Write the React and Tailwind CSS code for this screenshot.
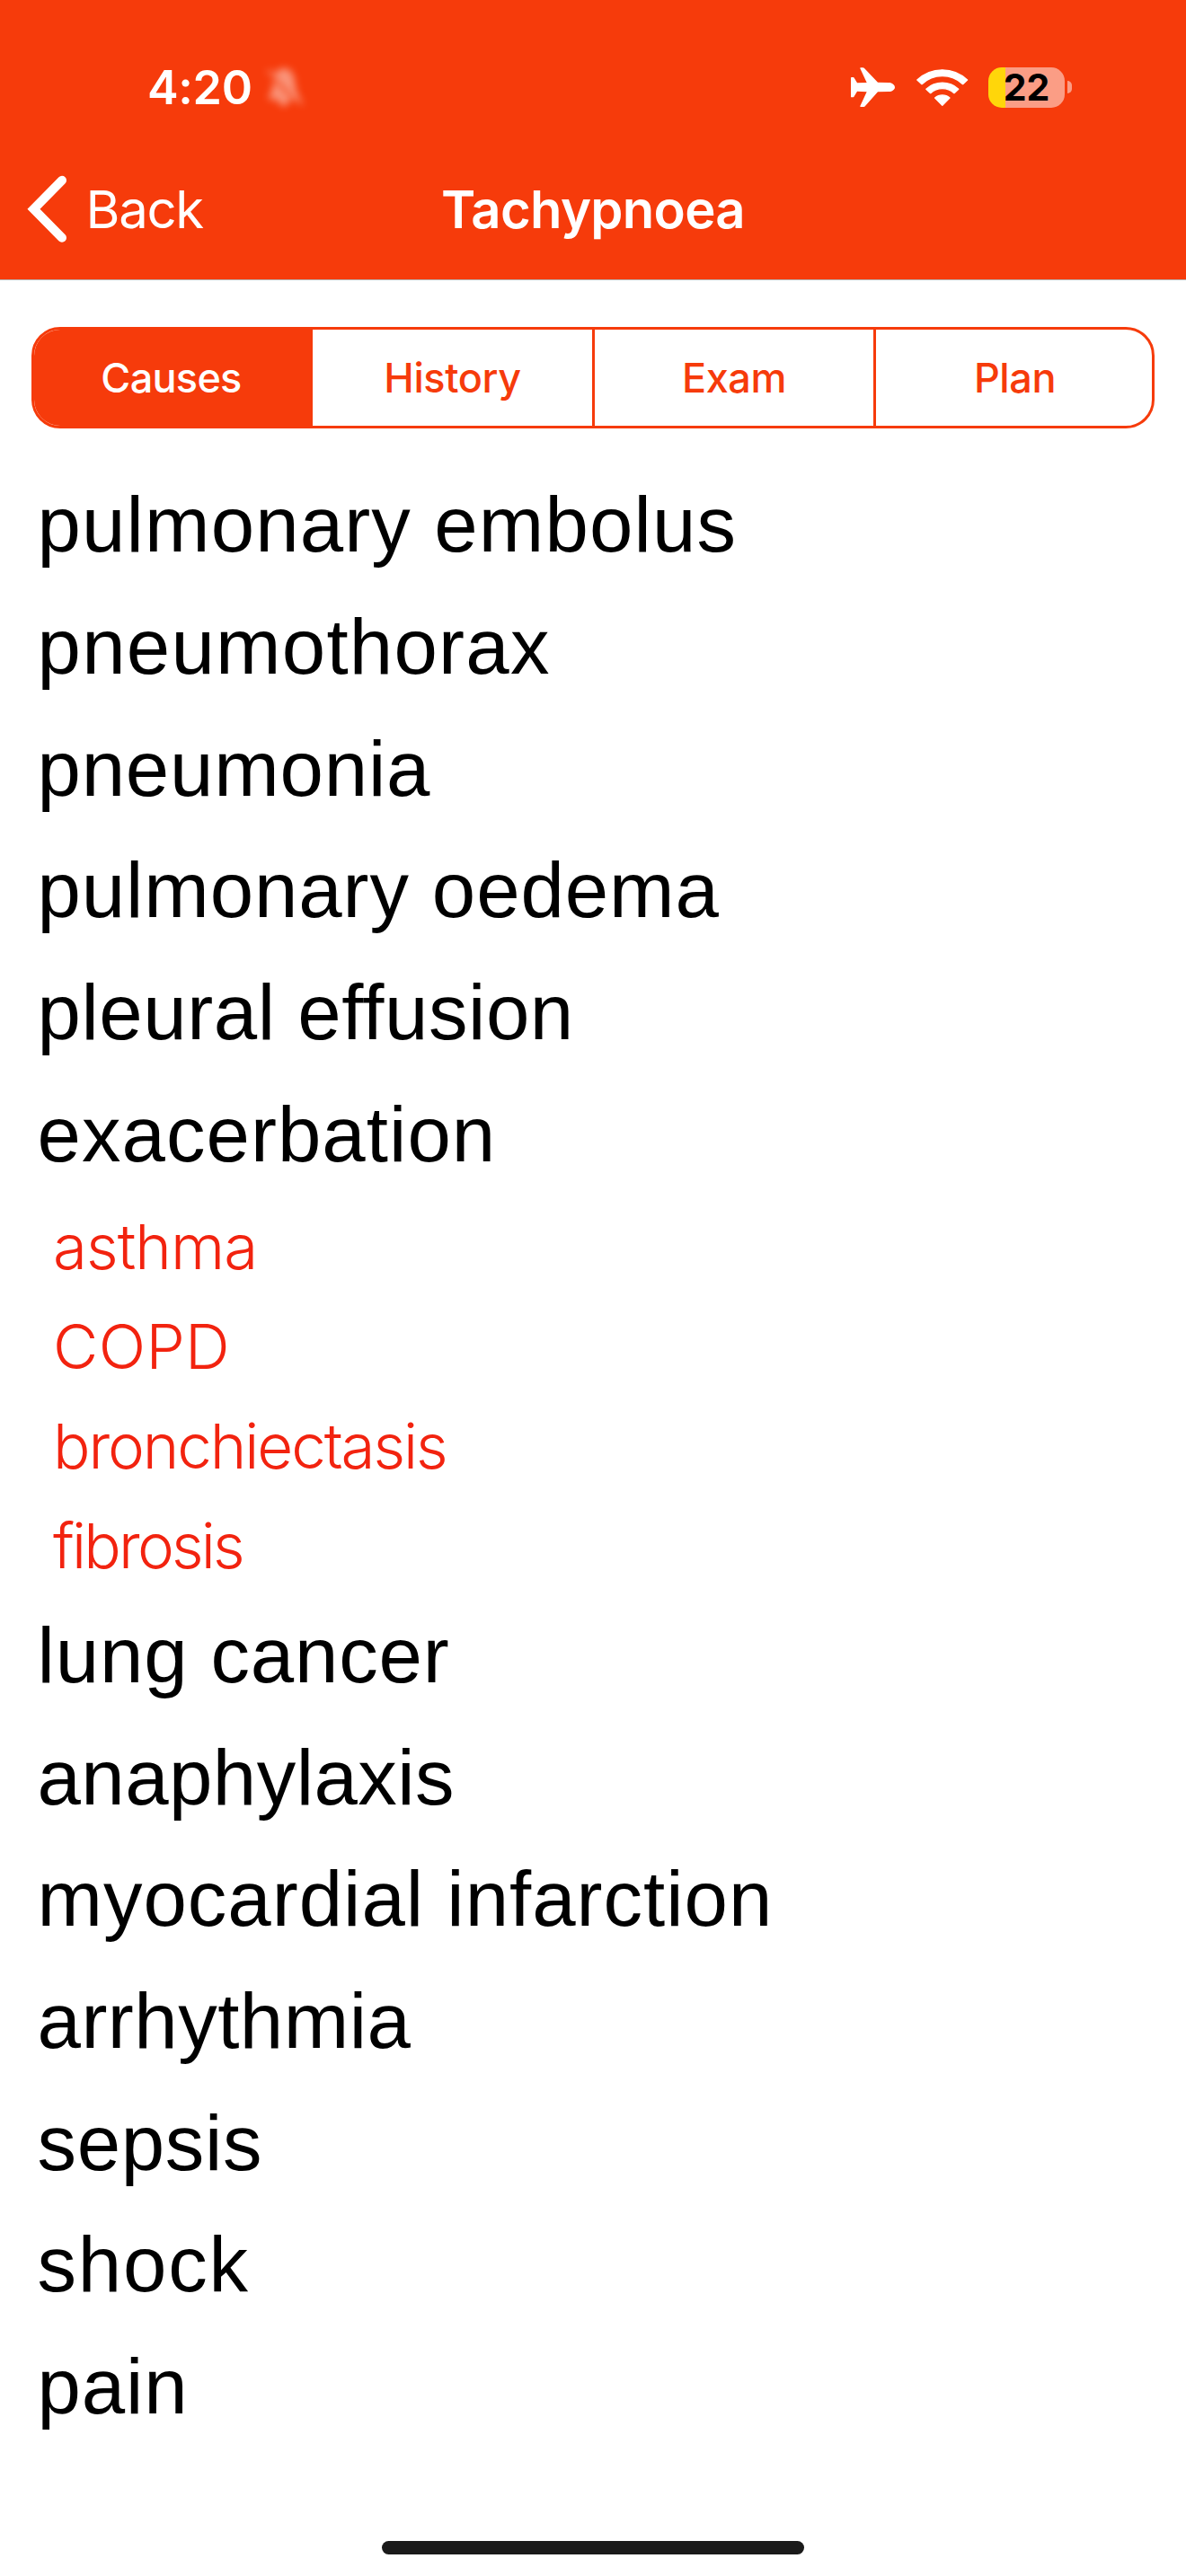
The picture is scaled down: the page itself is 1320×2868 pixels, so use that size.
import React from "react";

const causes = [
  { text: "pulmonary embolus", spacing: "tracking-[1.14px]" },
  { text: "pneumothorax", spacing: "tracking-[1.25px]" },
  { text: "pneumonia", spacing: "tracking-[0.8px]" },
  { text: "pulmonary oedema", spacing: "tracking-[0.9px]" },
  { text: "pleural effusion", spacing: "tracking-[0.55px]" },
  {
    text: "exacerbation",
    spacing: "tracking-[1.05px]",
    children: [
      { text: "asthma", spacing: "tracking-[-0.92px]" },
      { text: "COPD", spacing: "tracking-[0.4px]" },
      { text: "bronchiectasis", spacing: "tracking-[-2.1px]" },
      { text: "fibrosis", spacing: "tracking-[-2.8px]" },
    ],
  },
  { text: "lung cancer", spacing: "tracking-[0.85px]" },
  { text: "anaphylaxis", spacing: "tracking-[0.45px]" },
  { text: "myocardial infarction", spacing: "tracking-[1px]" },
  { text: "arrhythmia", spacing: "tracking-[0.49px]" },
  { text: "sepsis", spacing: "tracking-[0.7px]" },
  { text: "shock", spacing: "tracking-[1.8px]" },
  { text: "pain", spacing: "tracking-[0.9px]" },
];

function MutedBell() {
  return (
    <svg viewBox="0 0 36 44" className="ml-[17px] h-[44px] w-[36px] overflow-visible opacity-45 blur-[4.5px]" fill="#fff">
      <path d="M18 1C25 1 29 7 30 15C31 23 31 26 34 30C36 34 35 36 31 36H24C23 41 20 43 18 43C15 43 12 41 12 36H5C0 36 0 33 3 29C6 25 5 21 6 15C7 7 11 1 18 1Z" />
      <path d="M1 4L38 40" stroke="#fff" strokeWidth="3" strokeLinecap="round" />
      <path d="M4 10L28 34" stroke="#f63b0b" strokeWidth="3" />
    </svg>
  );
}

function Plane() {
  return (
    <svg viewBox="81 78 147 133" className="h-[44.3px] w-[49px]" fill="#fff">
      <path d="M81 113Q81 111 83 111H89Q91 111 92 113L102 130L134 129L112 82Q111 79 114 79H121Q124 79 126 81L171 128L208 129C219 129 228 137 228 144.500C228 152 219 159 208 159L171 160L129 207Q127 210 124 210H114Q111 210 112 207L134 160L102 158L92 175Q91 178 89 178H83Q81 178 81 176Z" />
    </svg>
  );
}

function Wifi() {
  return (
    <svg viewBox="299 75 173 127" className="h-[42.3px] w-[57.6px]" fill="#fff" stroke="#fff" strokeWidth="4" strokeLinejoin="round">
      <path d="M301.500 114A121.500 121.500 0 0 1 469 114L454 128A99.500 99.500 0 0 0 317 128Z" />
      <path d="M331.500 144.500A81 81 0 0 1 439.500 144.500L425 158A59 59 0 0 0 346 158Z" />
      <path d="M361 174A37 37 0 0 1 410 174L385.500 199Z" />
    </svg>
  );
}

function Battery() {
  return (
    <div className="flex items-center gap-[3px]">
      <div className="flex h-[45px] w-[85px] items-center justify-center rounded-[15px] bg-linear-to-r from-[#ffd60a] from-[19px] to-[#fb9d85] to-[19px] font-[650] text-[41px] leading-[45px] text-black">
        22
      </div>
      <div className="h-[14px] w-[5px] rounded-r-full bg-[#fb9d85]" />
    </div>
  );
}

function Header() {
  return (
    <header className="h-[312px] border-b border-[#b5b2b1] bg-[#f63b0b] pt-[64px] font-[Inter,sans-serif] text-white">
      <div className="flex h-[66px] items-center justify-between pr-[127px] pl-[164px]">
        <div className="flex items-center">
          <span className="pt-[2px] text-[52px] leading-none font-semibold tracking-[-0.3px]">4:20</span>
          <MutedBell />
        </div>
        <div className="flex items-center">
          <Plane />
          <div className="mr-[22px] ml-[24px]">
            <Wifi />
          </div>
          <Battery />
        </div>
      </div>
      <nav className="grid h-[181px] grid-cols-[1fr_auto_1fr] items-center pt-[25px]">
        <button className="flex items-center pl-[30px] text-[58px] leading-none tracking-[-1.3px]">
          <svg viewBox="30 196 46 76" className="mr-[19.500px] h-[76px] w-[46px]" fill="none" stroke="#fff" strokeWidth="10" strokeLinecap="round">
            <path d="M69 201.800L37.500 233.700L69 265.800" />
          </svg>
          Back
        </button>
        <h1 className="text-[58px] leading-none font-semibold tracking-[-0.7px]">Tachypnoea</h1>
      </nav>
    </header>
  );
}

function Tabs() {
  return (
    <div className="mx-[35px] mt-[52px] grid h-[113px] grid-cols-[310px_314px_313px_307px] overflow-hidden rounded-[32px] border-[3px] border-[#f63b0b] font-[Inter,sans-serif] text-[45px] leading-none font-[450] tracking-[-0.4px] text-[#f63b0b]">
      <button className="bg-[#f63b0b] pr-[5px] tracking-[-0.7px] text-white">Causes</button>
      <button className="border-r-[3px] border-[#f63b0b]">History</button>
      <button className="border-r-[3px] border-[#f63b0b]">Exam</button>
      <button className="pl-[2px]">Plan</button>
    </div>
  );
}

export default function App() {
  return (
    <div className="flex h-[2868px] w-[1320px] flex-col bg-white">
      <Header />
      <Tabs />
      <ul className="mt-[39.4px] font-['Liberation_Sans',sans-serif] text-[87px] text-black">
        {causes.map((cause) => (
          <li key={cause.text} className="pl-[41.500px]">
            <div className={`h-[135.7px] leading-[135.7px] ${cause.spacing}`}>{cause.text}</div>
            {cause.children && (
              <ul className="pl-[17.500px] font-[Inter,sans-serif] text-[69px] font-light text-[#f2230f]">
                {cause.children.map((child) => (
                  <li key={child.text} className={`flex h-[111.1px] items-center pt-[5px] leading-none ${child.spacing}`}>
                    {child.text}
                  </li>
                ))}
              </ul>
            )}
          </li>
        ))}
      </ul>
      <div className="mt-auto mb-[24px] h-[15px] w-[470px] self-center rounded-full bg-[#1a1a1a]" />
    </div>
  );
}
